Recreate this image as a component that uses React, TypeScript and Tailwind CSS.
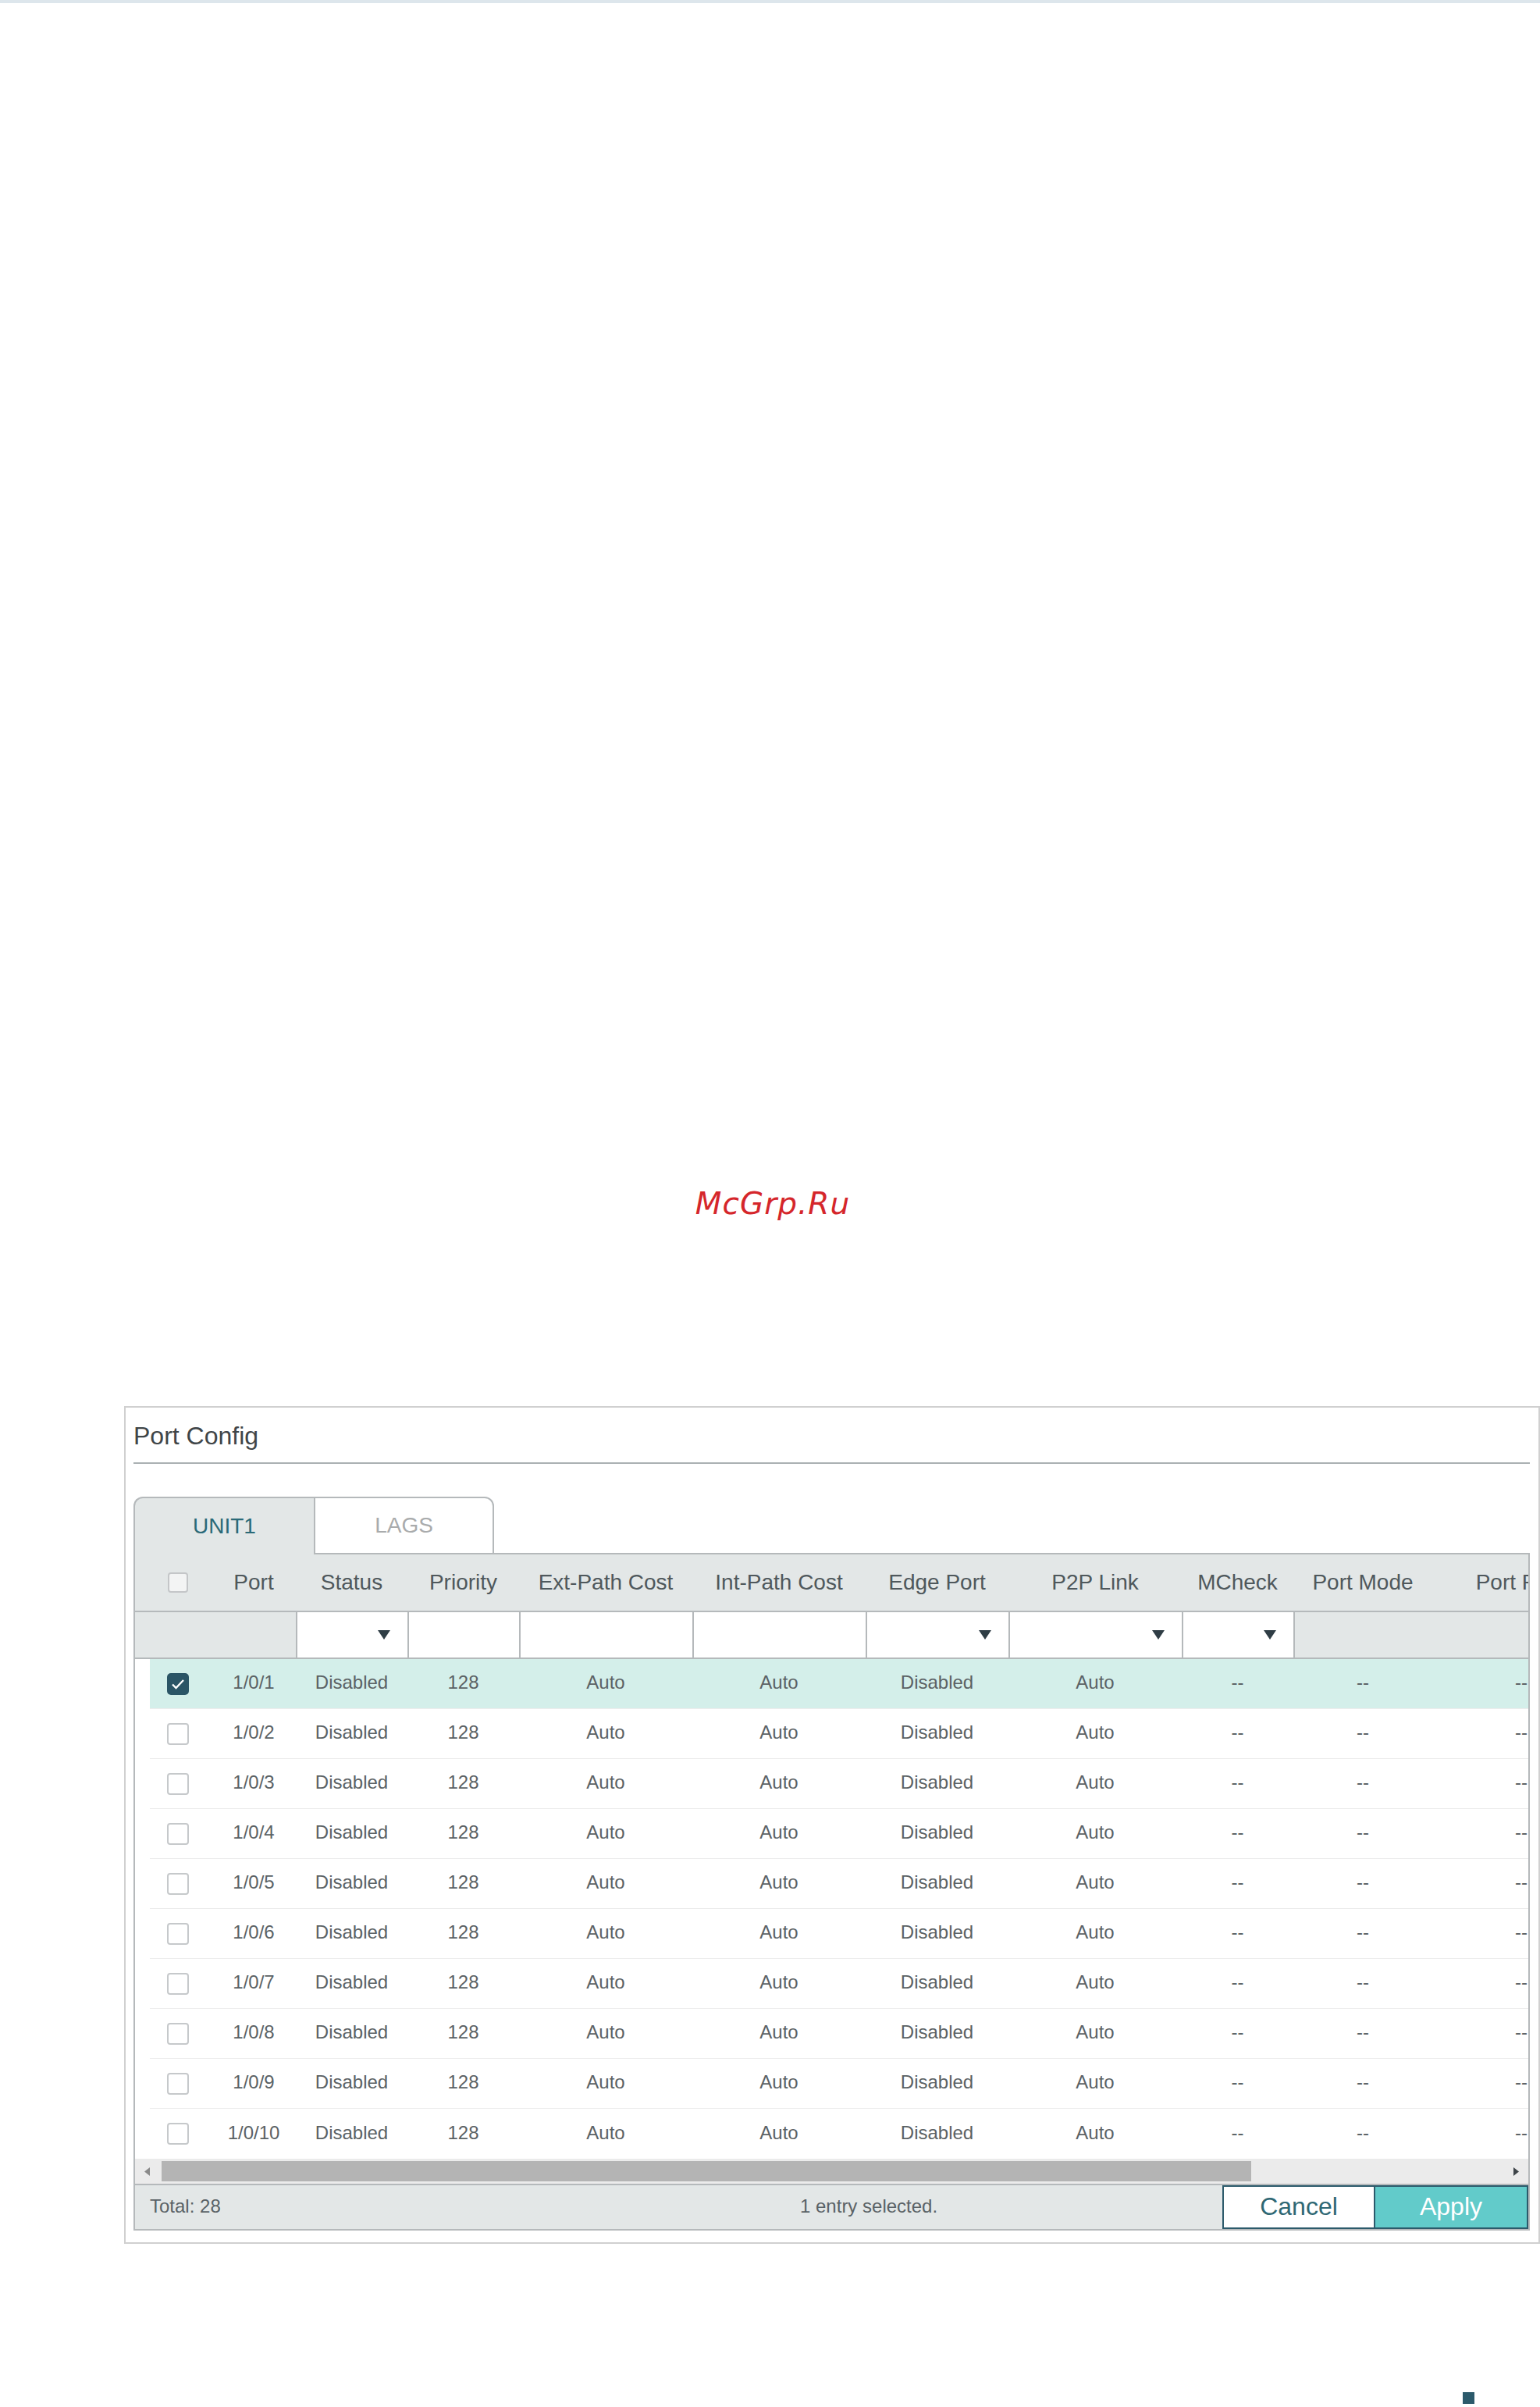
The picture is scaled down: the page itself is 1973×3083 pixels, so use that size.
import React from 'react';

type Col = { label: string; w: string; filter: 'none' | 'select' | 'input'; edge?: boolean };

// column widths measured off the screenshot (px)
const COLS: Col[] = [
  { label: 'Port', w: 'w-[108px]', filter: 'none' },
  { label: 'Status', w: 'w-[143px]', filter: 'select' },
  { label: 'Priority', w: 'w-[143px]', filter: 'input' },
  { label: 'Ext-Path Cost', w: 'w-[222px]', filter: 'input' },
  { label: 'Int-Path Cost', w: 'w-[222px]', filter: 'input' },
  { label: 'Edge Port', w: 'w-[183px]', filter: 'select' },
  { label: 'P2P Link', w: 'w-[222px]', filter: 'select' },
  { label: 'MCheck', w: 'w-[143px]', filter: 'select' },
  { label: 'Port Mode', w: 'w-[178px]', filter: 'none', edge: true },
  { label: 'Port Role', w: 'w-[228px]', filter: 'none' },
];

const rows = Array.from({ length: 10 }, (_, i) => [
  `1/0/${i + 1}`,
  'Disabled',
  '128',
  'Auto',
  'Auto',
  'Disabled',
  'Auto',
  '--',
  '--',
  '--',
]);

function Arrow() {
  return (
    <svg width="16" height="12" viewBox="0 0 16 12" className="absolute right-[22px] top-1/2 -translate-y-1/2">
      <polygon points="0,0 16,0 8,12" fill="#2f3d45" />
    </svg>
  );
}

function Checkbox({ checked, size }: { checked?: boolean; size: string }) {
  if (checked) {
    return (
      <div className={`${size} rounded-[5px] bg-[#2b5566] flex items-center justify-center`}>
        <svg width="18" height="14" viewBox="0 0 18 14">
          <path d="M2 7.5 L6.5 12 L16 2" stroke="white" strokeWidth="2.4" fill="none" />
        </svg>
      </div>
    );
  }
  return <div className={`${size} rounded-[4px] border-2 border-[#c6c9cb] bg-white`} />;
}

export default function App() {
  return (
    <div className="w-[1973px] h-[3083px] bg-white overflow-hidden flex flex-col" style={{ fontFamily: '"Liberation Sans", Arial, sans-serif' }}>
      <div className="h-[4px] bg-[#dde6ec] shrink-0" />

      <div
        className="mt-[1518px] h-[39px] leading-none text-center pl-[7px] text-[39px] italic tracking-[1px] text-[#d5262b]"
        style={{ fontFamily: '"DejaVu Sans", sans-serif' }}
      >
        McGrp.Ru
      </div>

      {/* Port Config panel */}
      <div className="mt-[240px] ml-[159px] w-[1814px] border-2 border-[#d0d0d0] pt-[20px] pl-[10px] pr-[11px] pb-[15px] shrink-0">
        <div className="h-[32px] leading-none text-[32px] text-[#3f4548]">Port Config</div>
        <div className="mt-[18px] h-[2px] bg-[#aab0b2]" />

        {/* tabs */}
        <div className="mt-[42px] flex h-[74px]">
          <div className="w-[231px] border-l-2 border-t-2 border-[#b5b9bb] rounded-tl-[12px] bg-[#e3e7e7] flex items-center justify-center text-[28px] text-[#2b6a78]">
            UNIT1
          </div>
          <div className="w-[231px] border-2 border-[#b5b9bb] rounded-tr-[12px] bg-white flex items-center justify-center text-[28px] text-[#a9abac]">
            LAGS
          </div>
          <div className="flex-1 border-b-2 border-[#b5b9bb]" />
        </div>

        {/* table */}
        <div className="border-x-2 border-b-2 border-[#b5b9bb]">
          <div className="overflow-hidden">
            <div className="w-max">
              {/* header */}
              <div className="flex h-[72px] bg-[#e3e7e7] text-[28px] text-[#4f585c]">
                <div className="w-[19px] shrink-0" />
                <div className="w-[79px] shrink-0 flex items-center pl-[23px]">
                  <div className="w-[26px] h-[26px] rounded-[4px] border-2 border-[#c4c6c8] bg-[#f3f4f4]" />
                </div>
                {COLS.map((c) => (
                  <div key={c.label} className={`${c.w} shrink-0 flex items-center justify-center whitespace-nowrap`}>
                    {c.label}
                  </div>
                ))}
              </div>

              {/* filter row */}
              <div className="flex h-[62px] bg-[#e3e7e7] border-y-2 border-[#b5b9bb]">
                <div className="w-[206px] shrink-0" />
                {COLS.slice(1).map((c) => (
                  <div
                    key={c.label}
                    className={`${c.w} shrink-0 relative ${c.filter !== 'none' ? 'bg-white border-l-2 border-[#b5b9bb]' : ''} ${c.edge ? 'border-l-2 border-[#b5b9bb]' : ''}`}
                  >
                    {c.filter === 'select' && <Arrow />}
                  </div>
                ))}
              </div>

              {/* data rows */}
              {rows.map((r, i) => (
                <div
                  key={r[0]}
                  className={`ml-[19px] flex h-[64px] text-[24px] text-[#5b6265] ${i === 0 ? 'bg-[#d4efea]' : 'bg-white'} ${i < rows.length - 1 ? 'border-b border-[#ececec]' : ''}`}
                >
                  <div className="w-[79px] shrink-0 flex items-center pl-[22px]">
                    <Checkbox checked={i === 0} size="w-[28px] h-[28px]" />
                  </div>
                  {COLS.map((c, j) => (
                    <div key={c.label} className={`${c.w} shrink-0 flex items-center justify-center pb-[3px] whitespace-nowrap`}>
                      {r[j]}
                    </div>
                  ))}
                </div>
              ))}
            </div>
          </div>

          {/* horizontal scrollbar */}
          <div className="h-[32px] bg-[#ebebeb] flex items-center">
            <div className="w-[30px] flex justify-center">
              <svg width="7" height="11" viewBox="0 0 7 11">
                <polygon points="7,0 7,11 0,5.5" fill="#8a8a8a" />
              </svg>
            </div>
            <div className="ml-[4px] w-[1396px] h-[26px] bg-[#b4b4b4]" />
            <div className="flex-1" />
            <div className="w-[32px] flex justify-center">
              <svg width="7" height="11" viewBox="0 0 7 11">
                <polygon points="0,0 0,11 7,5.5" fill="#3d4448" />
              </svg>
            </div>
          </div>

          {/* footer */}
          <div className="h-[58px] flex bg-[#e3e7e7] border-t-2 border-[#b5b9bb] text-[24px] text-[#5a6266]">
            <div className="w-[852px] pl-[19px] flex items-center pb-[3px]">Total: 28</div>
            <div className="flex items-center pb-[3px]">1 entry selected.</div>
            <div className="flex-1" />
            <button className="w-[196px] border-2 border-[#2c5a6b] bg-white text-[32px] text-[#2f6874] pb-[2px]">Cancel</button>
            <button className="w-[196px] border-2 border-l-0 border-[#2c5a6b] bg-[#62cbca] text-[32px] text-white pb-[2px]">Apply</button>
          </div>
        </div>
      </div>

      <div className="mt-[190px] ml-[1874px] w-[15px] h-[15px] bg-[#2c5a6b] shrink-0" />
    </div>
  );
}
